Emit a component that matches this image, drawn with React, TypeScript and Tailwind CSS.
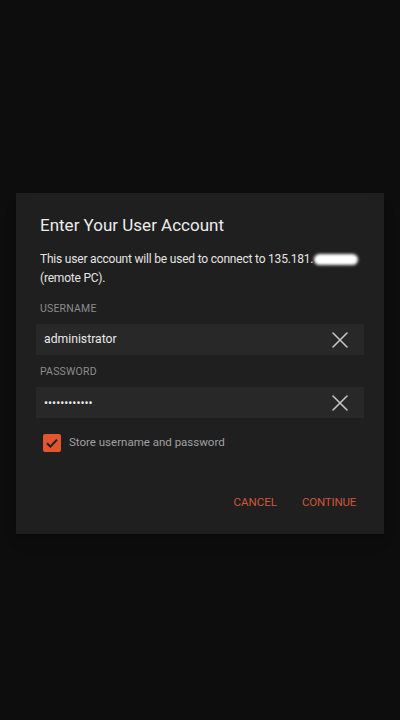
import { useState } from 'react';

function ClearIcon() {
  return (
    <svg width="16" height="16" viewBox="0 0 16 16" fill="none">
      <path d="M1 1L15 15M15 1L1 15" stroke="#c4c4c4" strokeWidth="1.6" strokeLinecap="round" />
    </svg>
  );
}

export default function App() {
  const [username, setUsername] = useState('administrator');
  const [password, setPassword] = useState('••••••••••••');
  const [store, setStore] = useState(true);

  return (
    <div
      className="w-[400px] h-[720px] bg-[#0d0d0d] flex flex-col pt-[193px] px-4"
      style={{ fontFamily: 'Roboto, "Noto Sans", sans-serif' }}
    >
      <div className="w-[368px] h-[341px] bg-[#1f1f1f] px-6 pt-5 pb-6 flex flex-col shadow-lg">
        <h2 className="text-[17px] leading-6 text-[#ececec]">Enter Your User Account</h2>

        <p className="mt-[13px] text-[12px] tracking-[-0.2px] leading-[19px] text-[#e4e4e4]">
          <span className="whitespace-nowrap">
            This user account will be used to connect to 135.181.
            <span className="inline-block align-middle w-[44px] h-[11px] ml-[1px] rounded-full bg-white blur-[1.5px]" />
          </span>
          <br />
          (remote PC).
        </p>

        {/* 用户名 */}
        <label className="mt-[14px] text-[10.5px] leading-[14px] tracking-[0.2px] text-[#8c8c8c]">USERNAME</label>
        <div className="mt-2 -mx-1 h-[31px] bg-[#282828] flex items-center pl-2 pr-4">
          <input
            value={username}
            onChange={e => setUsername(e.target.value)}
            className="flex-1 bg-transparent outline-none text-[12.2px] text-[#e8e8e8]"
          />
          <button onClick={() => setUsername('')} className="p-0">
            <ClearIcon />
          </button>
        </div>

        {/* 密码 */}
        <label className="mt-[10px] text-[10.5px] leading-[14px] tracking-[0.2px] text-[#8c8c8c]">PASSWORD</label>
        <div className="mt-2 -mx-1 h-[31px] bg-[#282828] flex items-center pl-2 pr-4">
          <input
            value={password}
            onChange={e => setPassword(e.target.value)}
            className="flex-1 bg-transparent outline-none text-[12px] text-[#e8e8e8]"
          />
          <button onClick={() => setPassword('')} className="p-0">
            <ClearIcon />
          </button>
        </div>

        <button
          onClick={() => setStore(!store)}
          className="mt-4 ml-[3px] flex items-center gap-[8px] text-left"
        >
          <span
            className={`w-[18px] h-[18px] rounded-[2px] flex items-center justify-center ${
              store ? 'bg-[#e1552f]' : 'border-2 border-[#888]'
            }`}
          >
            {store && (
              <svg width="14" height="14" viewBox="0 0 14 14" fill="none">
                <path d="M2 7.2L5.4 10.6L12 3.6" stroke="#1f1f1f" strokeWidth="2" />
              </svg>
            )}
          </span>
          <span className="text-[11.5px] text-[#a0a0a0]">Store username and password</span>
        </button>

        <div className="mt-auto flex justify-end gap-[25px] pr-[4px]">
          <button className="text-[11.5px] leading-4 text-[#d0563a]">CANCEL</button>
          <button className="text-[11.5px] leading-4 tracking-[-0.2px] text-[#d0563a]">CONTINUE</button>
        </div>
      </div>
    </div>
  );
}
